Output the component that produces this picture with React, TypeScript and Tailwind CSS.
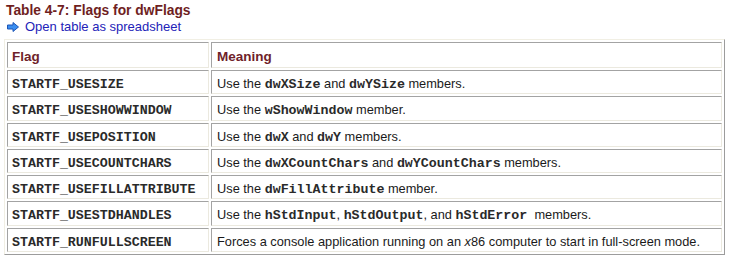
const rows: { flag: string; meaning: React.ReactNode }[] = [
  {
    flag: 'STARTF_USESIZE',
    meaning: (
      <>
        Use the <C>dwXSize</C> and <C>dwYSize</C> members.
      </>
    ),
  },
  {
    flag: 'STARTF_USESHOWWINDOW',
    meaning: (
      <>
        Use the <C>wShowWindow</C> member.
      </>
    ),
  },
  {
    flag: 'STARTF_USEPOSITION',
    meaning: (
      <>
        Use the <C>dwX</C> and <C>dwY</C> members.
      </>
    ),
  },
  {
    flag: 'STARTF_USECOUNTCHARS',
    meaning: (
      <>
        Use the <C>dwXCountChars</C> and <C>dwYCountChars</C> members.
      </>
    ),
  },
  {
    flag: 'STARTF_USEFILLATTRIBUTE',
    meaning: (
      <>
        Use the <C>dwFillAttribute</C> member.
      </>
    ),
  },
  {
    flag: 'STARTF_USESTDHANDLES',
    meaning: (
      <>
        Use the <C>hStdInput</C>, <C>hStdOutput</C>, and <C>hStdError</C>&nbsp; members.
      </>
    ),
  },
  {
    flag: 'STARTF_RUNFULLSCREEN',
    meaning: (
      <>
        Forces a console application running on an <i>x</i>86 computer to start in full-screen mode.
      </>
    ),
  },
];

function C({ children }: { children: React.ReactNode }) {
  return (
    <code className="font-['Liberation_Mono','Courier_New',monospace] font-bold text-[13.3px] leading-none text-[#2a2a2a]">
      {children}
    </code>
  );
}

const cell =
  'border border-t-[#a3a3a3] border-l-[#a3a3a3] border-b-[#ebe9df] border-r-[#ebe9df] px-[4px] align-middle';

export default function App() {
  return (
    <div className="min-h-screen bg-white pl-[4px] pt-[3px] font-['Liberation_Sans',Arial,sans-serif]">
      <div className="ml-[2px] text-[13.8px] leading-[16px] font-bold text-[#6f1f1f]">
        Table 4-7: Flags for dwFlags
      </div>
      <div className="ml-[3px] flex items-center gap-[6px] text-[13px] leading-[15px] text-[#2323b8]">
        <svg width="12" height="10" viewBox="0 0 12 10">
          <polygon
            points="0.5,3 6,3 6,0.5 11.5,5 6,9.5 6,7 0.5,7"
            fill="#3a8ef0"
            stroke="#1d55b5"
            strokeWidth="1"
            strokeLinejoin="round"
          />
        </svg>
        <span>Open table as spreadsheet</span>
      </div>

      <table className="mt-[5px] w-[721px] border-separate border-spacing-[2px] border border-t-[#f1efe4] border-l-[#f1efe4] border-r-[#9c9c9c] border-b-[#9c9c9c]">
        <thead>
          <tr>
            <th
              className={`${cell} w-[202px] pt-[6px] pb-[2px] text-left text-[13.5px] leading-[16px] font-bold text-[#6f1f2a]`}
            >
              Flag
            </th>
            <th className={`${cell} pt-[6px] pb-[2px] pl-[5px] text-left text-[13.5px] leading-[16px] font-bold text-[#6f1f2a]`}>
              Meaning
            </th>
          </tr>
        </thead>
        <tbody>
          {rows.map(r => (
            <tr key={r.flag}>
              <td className={`${cell} pt-[6px] pb-[2px] text-[12px] leading-[14px]`}>
                <C>{r.flag}</C>
              </td>
              <td className={`${cell} pt-[6px] pb-[2px] pl-[5px] text-[12.8px] leading-[14px] text-[#1a1a1a]`}>
                {r.meaning}
              </td>
            </tr>
          ))}
        </tbody>
      </table>
    </div>
  );
}
